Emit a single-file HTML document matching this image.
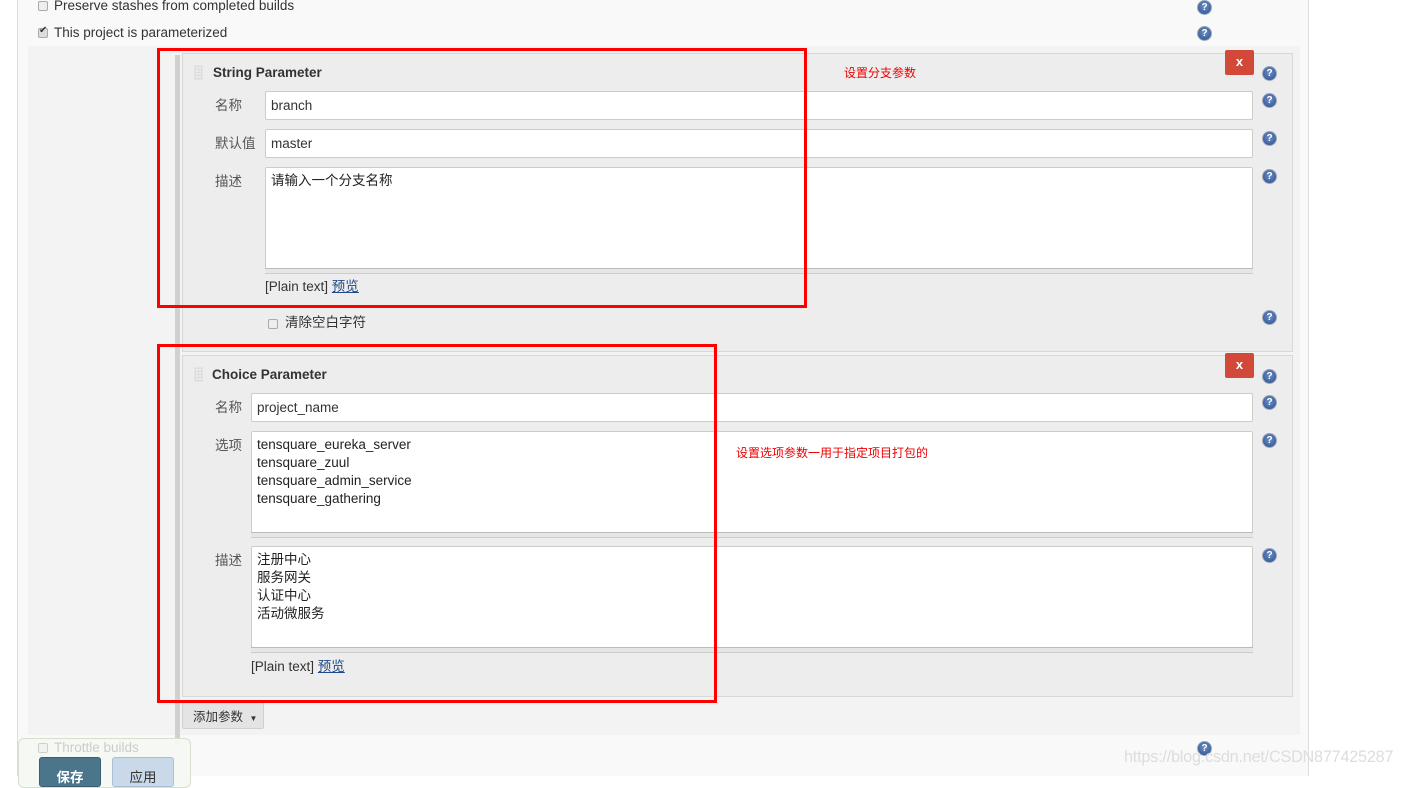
<!DOCTYPE html>
<html><head><meta charset="utf-8"><style>
*{box-sizing:border-box;margin:0;padding:0}
body{width:1405px;height:776px;overflow:hidden;background:#fff;position:relative;font-family:"Liberation Sans","Noto Sans CJK SC",sans-serif;font-size:13.5px;color:#333}
.a{position:absolute;white-space:nowrap}
.outer{left:17px;top:0;width:1292px;height:776px;background:#f9f9f9;border-left:1px solid #ddd;border-right:1px solid #ddd}
.inner{left:28px;top:46px;width:1272px;height:689px;background:#f3f3f3}
.cb{width:10px;height:10px;border:1px solid #aaa;border-radius:2px;background:#eee}
.help{width:15px;height:15px;border-radius:50%;background:radial-gradient(circle at 50% 40%,#6f8fc6,#2a4f8f);border:1px solid #9ab;color:#fff;font-size:10px;font-weight:bold;text-align:center;line-height:13px}
.box{left:182px;width:1111px;background:#ededed;border:1px solid #d8d8d8}
.inp{background:#fff;border:1px solid #ccc;border-radius:2px;height:29px;padding:5px 5px;font-size:13.5px;color:#333;line-height:18px}
.ta{background:#fff;border:1px solid #ccc;border-radius:2px;padding:4px 5px;line-height:18px;font-size:13.5px;color:#222;white-space:normal}
.lbl{font-size:13.5px;color:#555}
.x{width:29px;height:25px;background:#d24939;color:#fff;border-radius:2px;font-weight:bold;font-size:13px;text-align:center;line-height:24px}
.red{border:3px solid #f00}
.grip{width:9px;height:15px;background-image:linear-gradient(#ddd 1px,transparent 1px),linear-gradient(90deg,#ddd 1px,transparent 1px);background-size:3px 3px;border:1px solid #e4e4e4}
.ttl{font-weight:bold;font-size:13.5px;color:#333}
.bar{height:6px;border-top:1px solid #bbb;border-bottom:1px solid #ccc;background:#e6e6e6}
a{color:#204a87;text-decoration:underline}
.note{color:#e00;font-size:12px}
</style></head><body>
<div class="a outer"></div>
<div class="a inner"></div>
<div class="a cb" style="left:38px;top:1px"></div>
<div class="a" style="left:54px;top:-2px">Preserve stashes from completed builds</div>
<div class="a cb" style="left:38px;top:28px;background:#ddd"></div>
<div class="a" style="left:39px;top:25px;font-size:10px">✔</div>
<div class="a" style="left:54px;top:25px">This project is parameterized</div>
<div class="a help" style="left:1197px;top:0px">?</div>
<div class="a help" style="left:1197px;top:26px">?</div>

<div class="a" style="left:175px;top:55px;width:5px;height:690px;background:#d0d0d0"></div>

<div class="a box" style="top:53px;height:299px"></div>
<div class="a grip" style="left:194px;top:65px"></div>
<div class="a ttl" style="left:213px;top:65px">String Parameter</div>
<div class="a note" style="left:844px;top:64px">设置分支参数</div>
<div class="a x" style="left:1225px;top:50px">x</div>
<div class="a help" style="left:1262px;top:66px">?</div>
<div class="a lbl" style="left:215px;top:94px">名称</div>
<div class="a inp" style="left:265px;top:91px;width:988px">branch</div>
<div class="a help" style="left:1262px;top:93px">?</div>
<div class="a lbl" style="left:215px;top:132px">默认值</div>
<div class="a inp" style="left:265px;top:129px;width:988px">master</div>
<div class="a help" style="left:1262px;top:131px">?</div>
<div class="a lbl" style="left:215px;top:170px">描述</div>
<div class="a ta" style="left:265px;top:167px;width:988px;height:102px">请输入一个分支名称</div>
<div class="a bar" style="left:265px;top:268px;width:988px"></div>
<div class="a help" style="left:1262px;top:169px">?</div>
<div class="a" style="left:265px;top:275px">[Plain text] <a>预览</a></div>
<div class="a cb" style="left:268px;top:319px"></div>
<div class="a" style="left:285px;top:311px">清除空白字符</div>
<div class="a help" style="left:1262px;top:310px">?</div>

<div class="a box" style="top:355px;height:342px"></div>
<div class="a grip" style="left:194px;top:367px"></div>
<div class="a ttl" style="left:212px;top:367px">Choice Parameter</div>
<div class="a x" style="left:1225px;top:353px">x</div>
<div class="a help" style="left:1262px;top:369px">?</div>
<div class="a lbl" style="left:215px;top:396px">名称</div>
<div class="a inp" style="left:251px;top:393px;width:1002px">project_name</div>
<div class="a help" style="left:1262px;top:395px">?</div>
<div class="a lbl" style="left:215px;top:434px">选项</div>
<div class="a ta" style="left:251px;top:431px;width:1002px;height:102px">tensquare_eureka_server<br>tensquare_zuul<br>tensquare_admin_service<br>tensquare_gathering</div>
<div class="a note" style="left:736px;top:444px">设置选项参数一用于指定项目打包的</div>
<div class="a bar" style="left:251px;top:532px;width:1002px"></div>
<div class="a help" style="left:1262px;top:433px">?</div>
<div class="a lbl" style="left:215px;top:549px">描述</div>
<div class="a ta" style="left:251px;top:546px;width:1002px;height:102px">注册中心<br>服务网关<br>认证中心<br>活动微服务</div>
<div class="a bar" style="left:251px;top:647px;width:1002px"></div>
<div class="a help" style="left:1262px;top:548px">?</div>
<div class="a" style="left:251px;top:655px">[Plain text] <a>预览</a></div>

<div class="a" style="left:182px;top:700px;width:82px;height:29px;background:#e4e4e4;border:1px solid #d0d0d0;border-radius:2px;font-size:12.5px;padding:5px 0 0 10px">添加参数 <span style="font-size:8px;margin-left:3px">▼</span></div>

<div class="a red" style="left:157px;top:48px;width:650px;height:260px"></div>
<div class="a red" style="left:157px;top:344px;width:560px;height:359px"></div>

<div class="a help" style="left:1197px;top:741px">?</div>
<div class="a" style="left:1124px;top:748px;font-size:16.2px;color:#ddd;letter-spacing:-0.2px">https://blog.csdn.net/CSDN877425287</div>

<div class="a" style="left:18px;top:738px;width:173px;height:50px;background:rgba(245,248,242,0.95);border:1px solid #d6e0cf;border-radius:6px"></div>
<div class="a cb" style="left:38px;top:743px;opacity:.5"></div>
<div class="a" style="left:54px;top:740px;color:#ccc">Throttle builds</div>
<div class="a" style="left:39px;top:757px;width:62px;height:30px;background:#4b758b;border:1px solid #3a5f72;border-radius:3px;color:#fff;font-weight:bold;text-align:center;padding-top:8px">保存</div>
<div class="a" style="left:112px;top:757px;width:62px;height:30px;background:#c9d9ea;border:1px solid #a9bfd6;border-radius:3px;color:#333;text-align:center;padding-top:8px">应用</div>
</body></html>
